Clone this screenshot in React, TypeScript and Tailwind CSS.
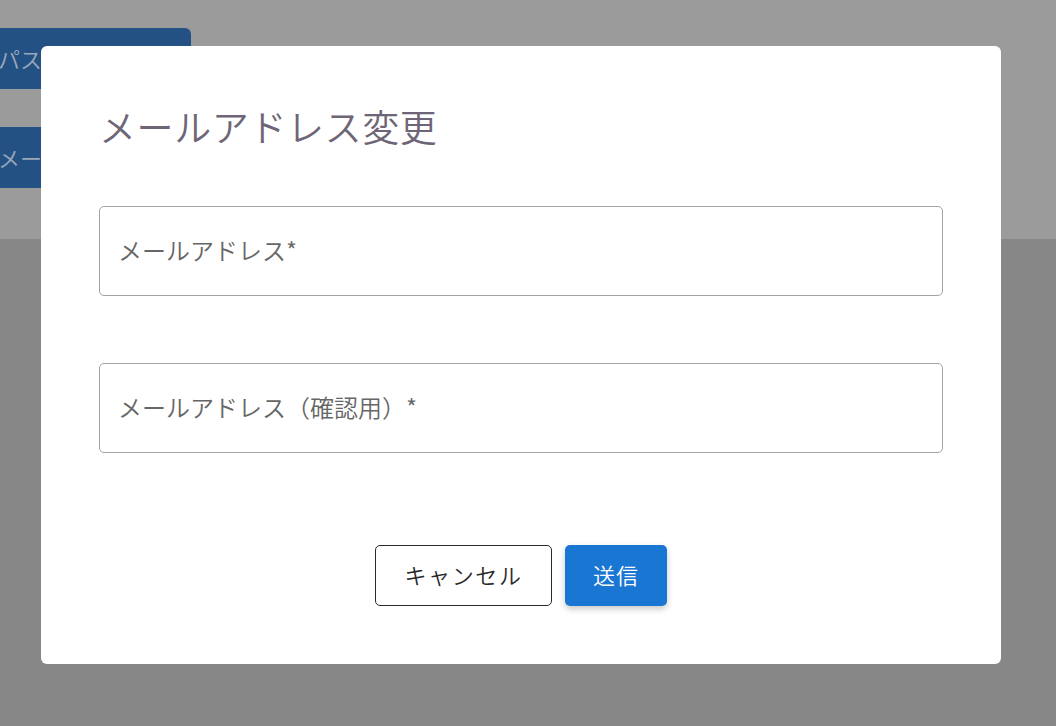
export default function App() {
  const font = { fontFamily: '"Noto Sans CJK JP", "Noto Sans", sans-serif' };
  return (
    <div className="relative w-[1056px] h-[726px] overflow-hidden bg-[#878787]" style={font}>
      {/* page behind overlay */}
      <div className="h-[239px] bg-[#9b9b9b] flex flex-col pt-[28px] gap-[38px]">
        <div className="w-[191px] h-[61px] bg-[#245183] rounded-r-[6px] flex items-center overflow-hidden whitespace-nowrap text-[22px] font-[350] text-[#9aa8bb] -indent-[2px]">パスワード変更</div>
        <div className="w-[191px] h-[61px] bg-[#245183] rounded-r-[6px] flex items-center overflow-hidden whitespace-nowrap text-[22px] font-[350] text-[#9aa8bb] -indent-[2px]">メールアドレス変更</div>
      </div>
      {/* dialog */}
      <div className="absolute left-[41px] top-[46px] w-[960px] h-[618px] bg-white rounded-[6px] px-[58px] pt-[52px] flex flex-col">
        <h2 className="text-[37px] leading-[56px] font-[350] text-[#6e6677] tracking-[0.6px]">メールアドレス変更</h2>
        <div className="mt-[52px] h-[90px] border border-[#a3a3a3] rounded-[5px] flex items-center px-[18px] pb-[2px] text-[24px] font-[350] text-[#666666]">
          メールアドレス*
        </div>
        <div className="mt-[67px] h-[90px] border border-[#a3a3a3] rounded-[5px] flex items-center px-[18px] pb-[2px] text-[24px] font-[350] text-[#666666]">
          メールアドレス（確認用）*
        </div>
        <div className="mt-[92px] flex justify-center gap-[13px]">
          <button className="w-[177px] h-[61px] border border-[#2a2a2a] rounded-[5px] pb-[3px] text-[22px] font-[350] text-[#2a2a2a] tracking-[1.6px] bg-white">
            キャンセル
          </button>
          <button className="w-[102px] h-[61px] rounded-[5px] bg-[#1976d2] pb-[3px] text-white text-[22px] font-[350] tracking-[1px] shadow-[0_3px_6px_rgba(0,0,0,0.22)]">
            送信
          </button>
        </div>
      </div>
    </div>
  );
}
